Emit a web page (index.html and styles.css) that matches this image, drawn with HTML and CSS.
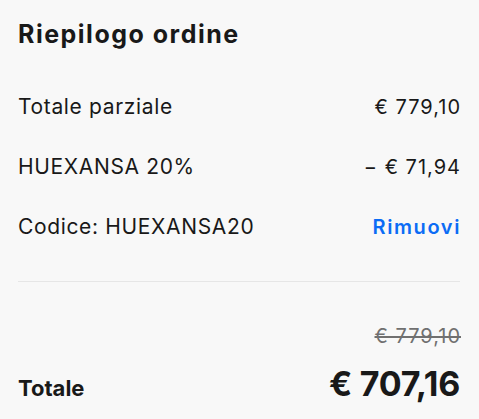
FILE: index.html
```html
<!DOCTYPE html>
<html lang="it">
<head>
<meta charset="utf-8">
<link rel="stylesheet" href="styles.css">
</head>
<body>
<section class="summary">
  <h2 class="title">Riepilogo ordine</h2>
  <div class="rows">
    <div class="row"><span class="label">Totale parziale</span><span class="val">€ 779,10</span></div>
    <div class="row"><span class="label">HUEXANSA 20%</span><span class="val">− € 71,94</span></div>
    <div class="row"><span class="label">Codice: HUEXANSA20</span><a class="link val" href="#">Rimuovi</a></div>
  </div>
  <hr class="divider">
  <div class="total">
    <div class="old val">€ 779,10</div>
    <div class="total-row"><span class="total-label">Totale</span><span class="total-value">€ 707,16</span></div>
  </div>
</section>
</body>
</html>
```
FILE: styles.css
```css
html, body {
  margin: 0;
  padding: 0;
  background: #f8f8f8;
}
body {
  font-family: Inter, "Liberation Sans", sans-serif;
  color: #191919;
  width: 479px;
  height: 419px;
  overflow: hidden;
}
.summary {
  padding: 19px 19px 0 18px;
}
.title {
  margin: 0;
  font-size: 25px;
  line-height: 30px;
  font-weight: 700;
  letter-spacing: 1.5px;
}
.rows {
  margin-top: 46px;
  display: flex;
  flex-direction: column;
  gap: 36px;
}
.row {
  display: flex;
  justify-content: space-between;
  font-size: 21px;
  line-height: 24px;
}
.label {
  letter-spacing: 0.65px;
}
.val {
  font-size: 20px;
  letter-spacing: 1px;
  margin-right: -1px;
}
.link {
  color: #0b6cf5;
  text-decoration: none;
  font-weight: 600;
  letter-spacing: 1.6px;
}
.divider {
  margin: 42px 0 0 0;
  border: 0;
  border-top: 1px solid #e6e6e6;
  height: 0;
}
.total {
  margin-top: 42px;
  display: flex;
  flex-direction: column;
}
.old {
  align-self: flex-end;
  line-height: 24px;
  color: #707070;
  text-decoration: line-through;
}
.total-row {
  display: flex;
  justify-content: space-between;
  align-items: baseline;
  margin-top: 16px;
}
.total-label {
  font-size: 22px;
  font-weight: 700;
  letter-spacing: 0;
}
.total-value {
  font-size: 34px;
  line-height: 40px;
  font-weight: 700;
  letter-spacing: -0.3px;
}
```
